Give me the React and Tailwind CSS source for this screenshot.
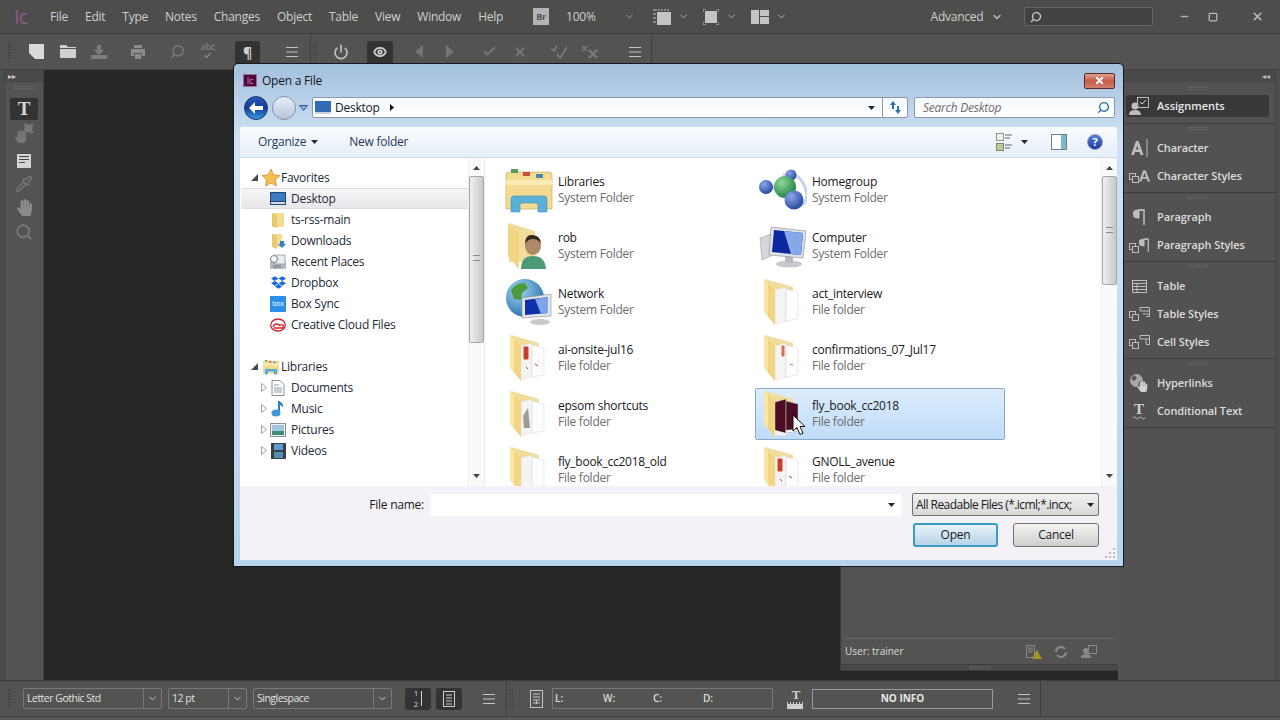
import React from "react";
import { ChevronDown, Power, Eye, Check, X, Search, Minus, Square, Pipette } from "lucide-react";
import { FaDropbox, FaHandPaper } from "react-icons/fa";

const Hamburger = () => (
  <svg width="14" height="10" viewBox="0 0 14 10" stroke="#c4c4c4" strokeWidth="1">
    <path d="M1 .5h12M1 5h12M1 9.5h12" />
  </svg>
);

const Grip = () => (
  <div className="w-[3px] h-[20px] border-x border-dotted border-[#3f3f3f]" />
);

const GripH = () => <div className="w-[20px] h-[3px] border-y border-dotted border-[#6c6c6c]" />;

// one toolbar slot, the margin gives its place
const Tb = ({ className = "", children }) => (
  <div className={`w-[20px] h-[24px] flex items-center justify-center shrink-0 ${className}`}>{children}</div>
);

const Caret = ({ className = "" }) => (
  <svg width="7" height="4" viewBox="0 0 7 4" className={className}>
    <path d="M0 0h7L3.5 4z" fill="#1c2a38" />
  </svg>
);

const FolderIcon = ({ kind = "blank" }) => {
  const accent = { red: "#c8402c", light: "#e06a50", dark: "#4a0d22", grey: "#a09a94", blank: "#e8e8e8" }[kind];
  return (
    <svg width="36" height="48" viewBox="0 0 36 48" className="mr-[4px]">
      <polygon points="2,1 30,9 30,16 2,14" fill="#f2dc9c" />
      <polygon points="12,12 23,9 23,43 12,46" fill={kind === "dark" ? accent : "#f4f4f4"} stroke="#d8d8d8" strokeWidth=".5" />
      <polygon points="23,11 35,14 35,41 23,43" fill={kind === "dark" ? accent : "#fdfdfd"} stroke="#d4d4d4" strokeWidth=".5" />
      {kind === "red" && <path d="M15 13h4v12h-4zM26 30l3 2M17 33l2 2" fill={accent} stroke={accent} />}
      {kind === "light" && <path d="M19 12h2v10h-2zM27 30l3 1" fill={accent} stroke={accent} />}
      {kind === "grey" && <path d="M14 26l5-8 2 20h-6z" fill={accent} />}
      {kind === "dark" && <path d="M12 40l11 3v2l-11 1zM23 40l12-1v2l-12 2z" fill="#f4f4f4" />}
      <polygon points="1,1 12,12 12,47 1,34" fill="#f1d583" />
      <polygon points="1,1 5,5 5,38 1,34" fill="#f8e6a6" />
    </svg>
  );
};

const LibrariesIcon = ({ size = 48 }) => (
  <svg width={size} height={size} viewBox="0 0 48 48">
    <path d="M1 9q0-3 3-3h40q3 0 3 3v34H1z" fill="#f3dc92" stroke="#c9ae64" strokeWidth=".7" />
    <rect x="6" y="3" width="7" height="4" fill="#5a9a5a" />
    <rect x="18" y="6" width="7" height="4" fill="#c8503a" />
    <rect x="31" y="8" width="7" height="4" fill="#4a88b8" />
    <path d="M1 14h46v5H1z" fill="#f9ebb8" />
    <path d="M6 46V33q0-3 3-3h30q3 0 3 3v13h-9v-7q0-2-2-2H17q-2 0-2 2v7z" fill="#5bb0d8" stroke="#3f8fb8" strokeWidth=".6" />
  </svg>
);

const RobIcon = () => (
  <svg width="40" height="48" viewBox="0 0 40 48" className="mr-[4px]">
    <polygon points="2,1 28,9 28,40 2,40" fill="#f2dc9c" />
    <polygon points="1,1 12,11 12,47 1,34" fill="#f1d583" />
    <ellipse cx="26" cy="24" rx="8" ry="9" fill="#b08a68" />
    <path d="M18 22q0-10 8-9t8 9q-3-5-8-5t-8 5z" fill="#33291f" />
    <path d="M14 47q0-13 12-13t13 13z" fill="#4d9a78" />
  </svg>
);

const NetworkIcon = () => (
  <svg width="48" height="48" viewBox="0 0 48 48">
    <defs>
      <radialGradient id="globe" cx=".35" cy=".3" r=".8">
        <stop offset="0" stopColor="#9fd4f0" />
        <stop offset="1" stopColor="#1f6aa8" />
      </radialGradient>
    </defs>
    <circle cx="20" cy="20" r="19" fill="url(#globe)" />
    <path d="M6 12q6-8 14-7l3 5-6 5-1 7-7-1zM22 24l8 2-2 9-5 3z" fill="#4c9a3c" />
    <ellipse cx="35" cy="44" rx="10" ry="3" fill="#c8c8c8" />
    <polygon points="17,20 46,16 46,38 17,40" fill="#e2e4e8" stroke="#8a8e94" strokeWidth=".6" />
    <polygon points="20,22 43,19 43,35 20,37" fill="#1030a8" />
    <polygon points="30,21 43,19 43,35 36,36" fill="#7ea4e8" />
  </svg>
);

const HomegroupIcon = () => (
  <svg width="48" height="42" viewBox="0 0 48 42">
    <defs>
      <radialGradient id="ballB" cx=".35" cy=".3" r=".8">
        <stop offset="0" stopColor="#8aa8e8" />
        <stop offset="1" stopColor="#1f3f98" />
      </radialGradient>
      <radialGradient id="ballG" cx=".35" cy=".3" r=".8">
        <stop offset="0" stopColor="#8ed89a" />
        <stop offset="1" stopColor="#127a3a" />
      </radialGradient>
    </defs>
    <path d="M24 6q16-4 22 12t-8 20" fill="none" stroke="#c8d4ec" strokeWidth="3" />
    <path d="M10 14q10 12 22 12" fill="none" stroke="#c8d4ec" strokeWidth="3" />
    <circle cx="32" cy="6" r="5.5" fill="url(#ballB)" />
    <circle cx="26" cy="18" r="11" fill="url(#ballG)" />
    <circle cx="7" cy="18" r="7" fill="url(#ballB)" />
    <circle cx="35" cy="31" r="9.5" fill="url(#ballB)" />
  </svg>
);

const ComputerIcon = () => (
  <svg width="48" height="44" viewBox="0 0 48 44">
    <polygon points="1,14 12,10 12,32 3,36" fill="#d4d6da" stroke="#8f9298" strokeWidth=".5" />
    <ellipse cx="30" cy="40" rx="13" ry="3.5" fill="#c6c8cc" />
    <rect x="26" y="31" width="8" height="8" fill="#b8babe" />
    <polygon points="12,3 47,7 44,34 10,31" fill="#dfe2e6" stroke="#868a90" strokeWidth=".6" />
    <polygon points="15,6 44,9 42,31 13,28" fill="#0c28a0" />
    <polygon points="25,7 44,9 42,31 32,30" fill="#86a8e8" />
  </svg>
);

const Small = {
  desktop: (
    <svg width="16" height="16" viewBox="0 0 16 16">
      <rect x="0" y="1" width="16" height="13" fill="#24476f" />
      <rect x="1" y="2" width="14" height="8" fill="#3d7cc4" />
      <rect x="1" y="11" width="14" height="2" fill="#d6dde6" />
    </svg>
  ),
  folder: (
    <svg width="16" height="16" viewBox="0 0 16 16">
      <path d="M2 1h12v14H2z" fill="#f3dc92" />
      <path d="M2 1l5 3v12l-5-2z" fill="#e8c76e" />
    </svg>
  ),
  downloads: (
    <svg width="16" height="16" viewBox="0 0 16 16">
      <path d="M2 1h10v13H2z" fill="#f3dc92" />
      <path d="M2 1l5 3v12l-5-2z" fill="#e8c76e" />
      <path d="M10 8h4v3h2l-4 4-4-4h2z" fill="#2f80d0" />
    </svg>
  ),
  recent: (
    <svg width="16" height="16" viewBox="0 0 16 16">
      <rect x="0" y="7" width="16" height="8" fill="#b4bac2" />
      <rect x="5" y="1" width="10" height="9" fill="#e8ebef" stroke="#8f959c" strokeWidth=".7" />
      <circle cx="4" cy="5" r="3.5" fill="#f4f4f4" stroke="#7c8288" />
      <path d="M3 11h8v3H3z" fill="#8f98a2" />
    </svg>
  ),
  box: (
    <div className="w-[16px] h-[16px] bg-[#2a8fe8] flex items-center justify-center text-white text-[7px] leading-none">box</div>
  ),
  cloud: (
    <svg width="16" height="14" viewBox="0 0 16 14" fill="none" stroke="#d81e28">
      <ellipse cx="8" cy="7" rx="7.3" ry="6" strokeWidth="1.3" />
      <path d="M3.5 9q0-3 3-3t3 2q1-2 3-1t0 3H4" strokeWidth="1.3" />
    </svg>
  ),
  doc: (
    <svg width="14" height="16" viewBox="0 0 14 16">
      <path d="M1 .5h8l4 4v11H1z" fill="#fbfbfb" stroke="#8b929a" />
      <path d="M3 5h5M3 8h8M3 10h8M3 12h8" stroke="#8fa0b8" />
    </svg>
  ),
  music: (
    <svg width="16" height="16" viewBox="0 0 16 16">
      <path d="M9 0v11" stroke="#2c80c4" strokeWidth="2" />
      <ellipse cx="6" cy="12" rx="4.5" ry="3.5" fill="#3f9ad8" />
      <path d="M9 0q5 2 4 7-1-3-4-3z" fill="#2c80c4" />
    </svg>
  ),
  pictures: (
    <svg width="16" height="14" viewBox="0 0 16 14">
      <rect x=".5" y=".5" width="15" height="13" fill="#eef1f4" stroke="#8a9098" />
      <rect x="2" y="2" width="12" height="6" fill="#9fc8e0" />
      <rect x="2" y="8" width="12" height="4" fill="#3f8a78" />
    </svg>
  ),
  videos: (
    <svg width="15" height="16" viewBox="0 0 15 16">
      <rect width="15" height="16" fill="#3a3f46" />
      <rect x="3" y="1" width="9" height="6" fill="#5d9ad0" />
      <rect x="3" y="9" width="9" height="6" fill="#4f8fb0" />
    </svg>
  ),
};

const NavHeader = ({ icon, label }) => (
  <div className="h-[21px] flex items-center pl-[10px] text-[12px] text-[#1e2a38]">
    <svg width="7" height="7" viewBox="0 0 7 7" className="mr-[3px]"><path d="M7 0v7H0z" fill="#4a4a4a" /></svg>
    <div className="w-[20px] flex justify-center">{icon}</div>
    <span>{label}</span>
  </div>
);

const NavItem = ({ icon, label, active, expander }) => (
  <div className={`h-[21px] flex items-center text-[12px] text-[#1e2a38] pl-[20px] border-y ${active ? "bg-gradient-to-b from-[#f6f6f8] to-[#e7e7ea] border-[#dcdcdf] rounded-l-[2px]" : "border-transparent"}`}>
    <div className="w-[9px]">
      {expander && (
        <svg width="6" height="9" viewBox="0 0 6 9"><path d="M.5.5l5 4-5 4z" fill="#fff" stroke="#a0a0a0" /></svg>
      )}
    </div>
    <div className="w-[16px] flex justify-center">{icon}</div>
    <span className="ml-[5px]">{label}</span>
  </div>
);

const Tile = ({ icon, name, sub, selected }) => (
  <div className={`w-[250px] h-[52px] flex items-center rounded-[2px] border ${selected ? "border-[#8aa8c8] bg-gradient-to-b from-[#dcecfc] to-[#c0dcf8]" : "border-transparent"}`}>
    <div className="w-[53px] h-[50px] flex items-center justify-center shrink-0">{icon}</div>
    <div className="ml-[3px] text-[12px] leading-[16px]">
      <div className="text-[#1a1a1a]">{name}</div>
      <div className="text-[#6d6d6d]">{sub}</div>
    </div>
  </div>
);

const ScrollBar = ({ thumbClass, gripClass }) => (
  <div className="w-[16px] h-full bg-[#fafafa] border-l border-[#eeeeee] flex flex-col items-center relative shrink-0">
    <svg width="7" height="4" viewBox="0 0 7 4" className="absolute top-[8px]"><path d="M3.5 0L7 4H0z" fill="#444" /></svg>
    <div className={`absolute top-[18px] left-0 w-[15px] rounded-[2px] border border-[#a8a8a8] bg-gradient-to-r from-[#f0f0f0] to-[#c8c8c8] ${thumbClass}`}>
      <div className={`absolute left-[3px] w-[7px] h-[6px] border-y border-[#8a8a8a] ${gripClass}`} />
    </div>
    <svg width="7" height="4" viewBox="0 0 7 4" className="absolute bottom-[8px]"><path d="M0 0h7L3.5 4z" fill="#444" /></svg>
  </div>
);

const Dialog = () => (
  <div className="absolute left-[233px] top-[63px] w-[891px] h-[504px] flex flex-col border border-[#141820] rounded-t-[5px] tracking-[-0.25px] bg-gradient-to-b from-[#a3c0dd] via-[#d0e2f4] via-15% to-[#b8d4ee]">
    <div className="h-[33px] flex items-center pl-[9px] pr-[8px] shrink-0">
      <div className="w-[14px] h-[13px] bg-[#4a0a3a] border border-[#a868a0] text-[#e080c8] text-[9px] leading-[11px] text-center">Ic</div>
      <span className="ml-[5px] text-[12px] text-[#10161c]">Open a File</span>
      <div className="ml-auto w-[31px] h-[16px] rounded-[2px] border border-[#5a2a26] bg-gradient-to-b from-[#e0a090] via-[#c85a48] to-[#d08070] flex items-center justify-center">
        <X size={11} strokeWidth={4} color="#fff" />
      </div>
    </div>

    <div className="h-[21px] flex items-center pl-[10px] pr-[8px] shrink-0">
      <div className="w-[24px] h-[24px] rounded-full bg-gradient-to-b from-[#2a5ab8] via-[#123a9a] to-[#3f9ae0] border border-[#143068] flex items-center justify-center">
        <svg width="14" height="12" viewBox="0 0 14 12"><path d="M6 0v4h8v4H6v4L0 6z" fill="#fff" /></svg>
      </div>
      <div className="ml-[4px] w-[24px] h-[24px] rounded-full bg-gradient-to-b from-[#e8eef6] to-[#b4c4d8] border border-[#7e94ae]" />
      <svg width="9" height="6" viewBox="0 0 9 6" className="ml-[3px]"><path d="M.5.5h8L4.5 5.5z" fill="#7fb0e0" stroke="#2c5a90" /></svg>
      <div className="ml-[4px] w-[596px] h-[21px] border border-[#8a98a8] rounded-[2px] bg-gradient-to-b from-[#f4f8fc] to-white flex items-center text-[12px] text-[#16202c]">
        <div className="ml-[2px] w-[16px] h-[13px] bg-[#2f6cb4] border-b-2 border-[#c8d4e0]" />
        <span className="ml-[4px]">Desktop</span>
        <svg width="4" height="7" viewBox="0 0 4 7" className="ml-[10px]"><path d="M0 0l4 3.5L0 7z" fill="#10161c" /></svg>
        <Caret className="ml-auto mr-[7px]" />
        <div className="w-[25px] h-full border-l border-[#8a98a8] flex items-center justify-center">
          <svg width="13" height="13" viewBox="0 0 13 13" fill="#2c70b8"><path d="M4 0L1 4h2v4h2V4h2zM9 13l3-4h-2V5H8v4H6z" /></svg>
        </div>
      </div>
      <div className="ml-[6px] flex-1 h-[21px] border border-[#8a98a8] rounded-[2px] bg-gradient-to-b from-[#f4f8fc] to-white flex items-center pl-[8px] pr-[4px] text-[12px] italic text-[#6d6d6d]">
        <span>Search Desktop</span>
        <Search size={13} strokeWidth={2.5} color="#2c6a98" className="ml-auto -scale-x-100" />
      </div>
    </div>

    <div className="flex-1 min-h-0 mx-[6px] mt-[9px] mb-[6px] flex flex-col">
      <div className="h-[31px] shrink-0 flex items-center pl-[18px] pr-[14px] text-[12px] text-[#1e3a5a] bg-gradient-to-b from-[#fafcfe] to-[#e6eef8] border-b border-[#d0dae4] rounded-t-[2px]">
        <span>Organize</span>
        <Caret className="ml-[5px]" />
        <span className="ml-[31px]">New folder</span>
        <div className="ml-auto flex items-center">
          <svg width="16" height="18" viewBox="0 0 16 18">
            <rect x=".5" y=".5" width="7" height="7" fill="#eef2ee" stroke="#8a9a8a" />
            <rect x=".5" y="10.5" width="7" height="7" fill="#b8cc98" stroke="#7a8a6a" />
            <path d="M9 2h7M9 5h5M9 12h7M9 15h5" stroke="#5a6a7a" />
          </svg>
          <Caret className="ml-[9px]" />
          <div className="ml-[23px] w-[16px] h-[16px] border border-[#6a8090] bg-white flex justify-end">
            <div className="w-[5px] bg-[#7ab8d0]" />
          </div>
          <div className="ml-[20px] w-[16px] h-[16px] rounded-full bg-gradient-to-b from-[#5a80d8] to-[#1c3a98] border border-[#8898b8] text-white text-[11px] font-bold leading-[14px] text-center">?</div>
        </div>
      </div>

      <div className="h-[328px] shrink-0 flex bg-white">
        <div className="w-[245px] shrink-0 flex border-r border-[#ececec]">
          <div className="flex-1 pt-[9px] pl-[1px]">
            <NavHeader label="Favorites" icon={<svg width="18" height="17" viewBox="0 0 18 17"><path d="M9 0l2.7 5.8 6.3.7-4.7 4.3 1.3 6.2L9 14l-5.6 3 1.3-6.2L0 6.5l6.3-.7z" fill="#f5c050" stroke="#c87e28" strokeWidth=".7" /></svg>} />
            <NavItem active label="Desktop" icon={Small.desktop} />
            <NavItem label="ts-rss-main" icon={Small.folder} />
            <NavItem label="Downloads" icon={Small.downloads} />
            <NavItem label="Recent Places" icon={Small.recent} />
            <NavItem label="Dropbox" icon={<FaDropbox size={15} color="#1a6ae0" />} />
            <NavItem label="Box Sync" icon={Small.box} />
            <NavItem label="Creative Cloud Files" icon={Small.cloud} />
            <div className="h-[21px]" />
            <NavHeader label="Libraries" icon={<LibrariesIcon size={16} />} />
            <NavItem expander label="Documents" icon={Small.doc} />
            <NavItem expander label="Music" icon={Small.music} />
            <NavItem expander label="Pictures" icon={Small.pictures} />
            <NavItem expander label="Videos" icon={Small.videos} />
          </div>
          <ScrollBar thumbClass="h-[167px]" gripClass="top-[78px]" />
        </div>

        <div className="flex-1 min-w-0 flex">
          <div className="flex-1 overflow-hidden pt-[6px] pl-[16px] relative">
            <div className="grid grid-cols-[254px_250px] auto-rows-[52px] gap-y-[4px]">
              <Tile name="Libraries" sub="System Folder" icon={<LibrariesIcon />} />
              <Tile name="Homegroup" sub="System Folder" icon={<HomegroupIcon />} />
              <Tile name="rob" sub="System Folder" icon={<RobIcon />} />
              <Tile name="Computer" sub="System Folder" icon={<ComputerIcon />} />
              <Tile name="Network" sub="System Folder" icon={<NetworkIcon />} />
              <Tile name="act_interview" sub="File folder" icon={<FolderIcon />} />
              <Tile name="ai-onsite-jul16" sub="File folder" icon={<FolderIcon kind="red" />} />
              <Tile name="confirmations_07_Jul17" sub="File folder" icon={<FolderIcon kind="light" />} />
              <Tile name="epsom shortcuts" sub="File folder" icon={<FolderIcon kind="grey" />} />
              <Tile selected name="fly_book_cc2018" sub="File folder" icon={<FolderIcon kind="dark" />} />
              <Tile name="fly_book_cc2018_old" sub="File folder" icon={<FolderIcon />} />
              <Tile name="GNOLL_avenue" sub="File folder" icon={<FolderIcon kind="red" />} />
            </div>
            {/* mouse pointer */}
            <svg width="14" height="22" viewBox="0 0 14 22" className="absolute left-[307px] top-[256px]">
              <path d="M1 1v16l4-3.500 3 7 3-1.300-3-6.700h5z" fill="#fff" stroke="#111" strokeWidth="1" />
            </svg>
          </div>
          <ScrollBar thumbClass="h-[109px]" gripClass="top-[50px]" />
        </div>
      </div>

      <div className="flex-1 min-h-0 bg-[#f4f2f7] pt-[7px] pr-[18px] text-[12px] text-[#1a1a1a] relative">
        <div className="h-[23px] flex items-center justify-end">
          <span>File name:</span>
          <div className="ml-[6px] w-[471px] h-[22px] bg-white flex items-center justify-end pr-[6px]">
            <Caret />
          </div>
          <div className="ml-[11px] w-[187px] h-[23px] border border-[#707070] rounded-[2px] bg-gradient-to-b from-[#f2f2f2] to-[#d8d8d8] flex items-center pl-[3px] pr-[4px]">
            <span className="whitespace-nowrap tracking-[-0.55px]">All Readable Files (*.icml;*.incx;</span>
            <Caret className="ml-auto" />
          </div>
        </div>
        <div className="mt-[7px] h-[24px] flex justify-end gap-[15px]">
          <div className="w-[85px] h-full rounded-[3px] border-2 border-[#3a9ac8] bg-gradient-to-b from-[#e8f2fa] to-[#b8d4e8] flex items-center justify-center">Open</div>
          <div className="w-[86px] h-full rounded-[3px] border border-[#707070] bg-gradient-to-b from-[#f4f4f4] to-[#cfcfcf] flex items-center justify-center">Cancel</div>
        </div>
        {/* resize corner */}
        <svg width="10" height="10" viewBox="0 0 10 10" fill="#b8bcc4" className="absolute right-[2px] bottom-[2px]">
          <path d="M8 0h2v2H8zM4 4h2v2H4zM8 4h2v2H8zM0 8h2v2H0zM4 8h2v2H4zM8 8h2v2H8z" />
        </svg>
      </div>
    </div>
  </div>
);

const DockGroup = ({ className = "", children }) => (
  <div className={`border-b border-[#3c3c3c] flex flex-col ${className}`}>
    <div className="h-[9px] flex items-center justify-center shrink-0"><GripH /></div>
    {children}
  </div>
);

const DockRow = ({ icon, label, className = "" }) => (
  <div className={`h-[28px] flex items-center ml-[6px] ${className}`}>
    <div className="w-[26px] flex justify-center">{icon}</div>
    <span className="ml-[5px] text-[11px] font-semibold tracking-[-0.1px] text-[#dcdcdc] whitespace-nowrap">{label}</span>
  </div>
);

const Stack = () => (
  <svg width="10" height="10" viewBox="0 0 10 10" fill="#535353" stroke="#bdbdbd"><rect x=".5" y=".5" width="6" height="6" /><rect x="3.500" y="3.500" width="6" height="6" /></svg>
);

const ParaGlyph = ({ size = 13 }) => (
  <svg width={size} height={size + 4} viewBox="0 0 13 17">
    <path d="M10 1H5Q0 1 0 5t5 4h1V1z" fill="#bdbdbd" stroke="#bdbdbd" />
    <path d="M6 1h5v15" fill="none" stroke="#bdbdbd" strokeWidth="1.500" />
  </svg>
);

const Dock = () => (
  <div className="w-[156px] shrink-0 bg-[#525252] border-r border-[#444] flex flex-col">
    <div className="h-[12px] bg-[#484848] text-[8px] leading-[12px] text-right pr-[5px] text-[#bbb] shrink-0">◂◂</div>
    <div className="border-b border-[#3c3c3c] flex flex-col h-[42px] shrink-0">
      <div className="h-[12px] flex items-center justify-center shrink-0"><GripH /></div>
      <div className="mt-[1px] mx-[6px] h-[22px] bg-[#383838] rounded-[2px] flex items-center">
        <div className="w-[26px] flex justify-center">
          <svg width="20" height="18" viewBox="0 0 20 18">
            <rect x="8.500" y=".5" width="11" height="10" fill="none" stroke="#bdbdbd" />
            <path d="M11 5l2 2 4-4" fill="none" stroke="#d8d8d8" />
            <circle cx="6" cy="9" r="3.500" fill="#bdbdbd" />
            <path d="M0 18q0-5 6-5t6 5z" fill="#bdbdbd" />
          </svg>
        </div>
        <span className="ml-[5px] text-[11px] font-semibold text-[#e8e8e8]">Assignments</span>
      </div>
    </div>
    <DockGroup className="h-[69px] shrink-0">
      <DockRow className="mt-[1px]" label="Character" icon={<svg width="17" height="18" viewBox="0 0 17 18"><path d="M0 16L5 2h2.500l5 14h-3l-1-3H4l-1 3zM5 10.500h2.500L6.200 6.500z" fill="#bdbdbd" /><path d="M16 0v18" stroke="#bdbdbd" /></svg>} />
      <DockRow label="Character Styles" icon={<div className="flex items-end"><Stack /><svg width="11" height="14" viewBox="0 0 12 14"><path d="M0 13L4.500 1h3L12 13H9.500l-1-3h-5l-1 3zM4.300 8h3.400L6 3.500z" fill="#bdbdbd" /></svg></div>} />
    </DockGroup>
    <DockGroup className="h-[69px] shrink-0">
      <DockRow className="mt-[1px]" label="Paragraph" icon={<ParaGlyph />} />
      <DockRow label="Paragraph Styles" icon={<div className="flex items-end"><Stack /><ParaGlyph size={11} /></div>} />
    </DockGroup>
    <DockGroup className="h-[97px] shrink-0">
      <DockRow className="mt-[1px]" label="Table" icon={<svg width="15" height="13" viewBox="0 0 15 13" fill="none" stroke="#bdbdbd"><rect x=".5" y=".5" width="14" height="12" /><path d="M.5 3.500h14M.5 6.500h14M.5 9.500h14M5 3.500v9" /></svg>} />
      <DockRow label="Table Styles" icon={<div className="flex items-end"><Stack /><svg width="11" height="14" viewBox="0 0 11 14" fill="none" stroke="#bdbdbd"><path d="M1 4V.5h9.500v9H7M1 4h9.500M4 7h6.500" /></svg></div>} />
      <DockRow label="Cell Styles" icon={<div className="flex items-end"><Stack /><svg width="11" height="14" viewBox="0 0 11 14" fill="none" stroke="#bdbdbd"><path d="M1 4V.5h9.500v9H7M1 4h9.500M7 4v5" /></svg></div>} />
    </DockGroup>
    <DockGroup className="h-[69px] shrink-0">
      <DockRow className="mt-[1px]" label="Hyperlinks" icon={<div className="relative w-[18px] h-[18px]"><svg width="13" height="13" viewBox="0 0 13 13" className="absolute left-0 top-0"><circle cx="6.500" cy="6.500" r="6.500" fill="#a8a8a8" /><path d="M4 1l3 3-3 3-3-2zM9 8l3-1-1 4-3 1z" fill="#535353" /></svg><FaHandPaper size={11} color="#d0d0d0" className="absolute right-0 bottom-0" /></div>} />
      <DockRow label="Conditional Text" icon={<div className="flex flex-col items-center"><span className="font-['Liberation_Serif',serif] font-bold text-[15px] leading-[13px] text-[#d0d0d0]">T</span><svg width="13" height="4" viewBox="0 0 13 4"><path d="M0 2q1.500-2 3 0t3 0 3 0 3 0" fill="none" stroke="#bdbdbd" /></svg></div>} />
    </DockGroup>
  </div>
);

const SelectBox = ({ className, label }) => (
  <div className={`h-[21px] border border-[#787878] rounded-[2px] flex items-center text-[10.5px] tracking-[-0.5px] text-[#e0e0e0] ${className}`}>
    <span className="flex-1 pl-[3px] whitespace-nowrap">{label}</span>
    <div className="w-[18px] h-full border-l border-[#787878] flex items-center justify-center">
      <ChevronDown size={11} color="#cfcfcf" />
    </div>
  </div>
);

const MenuBar = () => (
  <div className="h-[34px] shrink-0 flex items-center bg-[#4d4d4b] border-b border-[#3a3a3a] text-[12px] tracking-[-0.25px] text-[#cfcfcf]">
    <span className="ml-[14px] w-[36px] text-[20px] leading-none text-[#8a5a88] tracking-[-1px]">Ic</span>
    <div className="flex gap-[17px]">
      {["File", "Edit", "Type", "Notes", "Changes", "Object", "Table", "View", "Window", "Help"].map((m) => (
        <span key={m}>{m}</span>
      ))}
    </div>
    <div className="ml-[30px] w-[16px] h-[17px] bg-[#b4b4b4] text-[#555] text-[9px] font-bold text-center leading-[17px]">Br</div>
    <span className="ml-[17px]">100%</span>
    <ChevronDown size={11} color="#999" className="ml-[28px]" />
    <svg width="18" height="16" viewBox="0 0 18 16" className="ml-[18px]"><rect x="4" y="3" width="14" height="13" fill="#c4c4c4" /><path d="M0 1h4M0 5h3M0 9h3M0 13h3M6 0v2M9 0v2M12 0v2M15 0v2" stroke="#c4c4c4" /></svg>
    <ChevronDown size={11} color="#bbb" className="ml-[7px]" />
    <svg width="16" height="16" viewBox="0 0 16 16" className="ml-[14px]"><rect x="2" y="2" width="12" height="12" fill="#c4c4c4" /><path d="M0 3V0h3M13 0h3v3M16 13v3h-3M3 16H0v-3" fill="none" stroke="#c4c4c4" /></svg>
    <ChevronDown size={11} color="#bbb" className="ml-[7px]" />
    <svg width="18" height="14" viewBox="0 0 18 14" fill="#c4c4c4" className="ml-[14px]"><rect width="8" height="14" /><rect x="9" width="9" height="6" /><rect x="9" y="7" width="9" height="7" /></svg>
    <ChevronDown size={11} color="#bbb" className="ml-[7px]" />
    <span className="ml-[144px]">Advanced</span>
    <ChevronDown size={12} strokeWidth={3} color="#bbb" className="ml-[8px]" />
    <div className="ml-[21px] w-[129px] h-[19px] border border-[#666] rounded-[2px] bg-[#434341] flex items-center pl-[5px]">
      <Search size={12} strokeWidth={2.5} color="#cfcfcf" className="-scale-x-100" />
    </div>
    <Minus size={11} strokeWidth={3} color="#aaa" className="ml-[26px]" />
    <Square size={10} strokeWidth={3} color="#bbb" className="ml-[18px]" />
    <X size={13} strokeWidth={3} color="#bbb" className="ml-[33px]" />
  </div>
);

const ControlBar = () => (
  <div className="h-[36px] shrink-0 flex items-center bg-[#535351] border-b border-[#444]">
    <div className="ml-[8px]"><Grip /></div>
    <Tb className="ml-[15px]">
      <svg width="15" height="15" viewBox="0 0 15 15"><path d="M0 0h15v15H6L0 9z" fill="#dadada" /></svg>
    </Tb>
    <Tb className="ml-[12px]">
      <svg width="16" height="13" viewBox="0 0 16 13" fill="#d0d0d0"><path d="M0 0h6l2 2h8v1H0zM0 4h16v9H0z" /></svg>
    </Tb>
    <Tb className="ml-[11px]">
      <svg width="16" height="14" viewBox="0 0 16 14" fill="#7c7c7c"><path d="M6 0h4v5h3l-5 5-5-5h3zM0 10h16v4H0z" /></svg>
    </Tb>
    <Tb className="ml-[19px]">
      <svg width="14" height="14" viewBox="0 0 14 14" fill="#8c8c8c"><path d="M3 0h8v3H3zM0 4h14v7h-3V8H3v3H0zM4 9h6v5H4z" /></svg>
    </Tb>
    <Tb className="ml-[19px]"><Search size={15} strokeWidth={2.5} color="#777" className="-scale-x-100" /></Tb>
    <Tb className="ml-[11px]">
      <div className="flex flex-col items-center text-[9px] leading-[8px] text-[#8c8c8c]">abc<Check size={9} strokeWidth={3} color="#8c8c8c" /></div>
    </Tb>
    <div className="ml-[17px] w-[25px] h-[28px] self-end bg-[#333] rounded-t-[3px] flex justify-center pt-[1px] text-[#d0d0d0] text-[14px] font-bold">¶</div>
    <Tb className="ml-[22px]"><Hamburger /></Tb>
    <div className="ml-[8px] w-px h-full bg-[#3f3f3f]" />
    <div className="ml-[2px]"><Grip /></div>
    <Tb className="ml-[15px]"><Power size={16} strokeWidth={2.5} color="#c0c0c0" /></Tb>
    <div className="ml-[16px] w-[26px] h-[28px] self-end bg-[#333] rounded-t-[3px] flex justify-center pt-[4px]"><Eye size={14} strokeWidth={3} color="#d0d0d0" /></div>
    <Tb className="ml-[16px]"><svg width="8" height="13" viewBox="0 0 8 13"><path d="M8 0v13L0 6.500z" fill="#747474" /></svg></Tb>
    <Tb className="ml-[11px]"><svg width="8" height="13" viewBox="0 0 8 13"><path d="M0 0v13l8-6.500z" fill="#747474" /></svg></Tb>
    <Tb className="ml-[19px]"><Check size={15} strokeWidth={3} color="#777" /></Tb>
    <Tb className="ml-[11px]"><X size={14} strokeWidth={3.500} color="#777" /></Tb>
    <Tb className="ml-[19px]"><svg width="16" height="14" viewBox="0 0 16 14" fill="none" stroke="#7c7c7c" strokeWidth="1.500"><path d="M0 3l3 3 3-5M6 9l3 4 7-11" /></svg></Tb>
    <Tb className="ml-[11px]"><svg width="16" height="14" viewBox="0 0 16 14" fill="none" stroke="#7c7c7c" strokeWidth="1.500"><path d="M0 1l5 5M5 1L0 6" /><path d="M7 5l8 8M15 5l-8 8" strokeWidth="2" /></svg></Tb>
    <Tb className="ml-[25px]"><Hamburger /></Tb>
    <div className="ml-[6px] w-px h-full bg-[#3f3f3f]" />
  </div>
);

const ToolBar = () => (
  <div className="w-[44px] shrink-0 bg-[#4d4d4b] pl-[4px] flex">
    <div className="flex-1 bg-[#535351] border-x border-[#444] flex flex-col items-center">
      <div className="h-[12px] w-full bg-[#484848] text-[8px] leading-[12px] pl-[3px] text-[#ccc]">▸▸</div>
      <div className="mt-[4px]"><GripH /></div>
      <div className="mt-[9px] w-[28px] h-[22px] bg-[#333] rounded-[2px] flex items-center justify-center font-['Liberation_Serif',serif] font-bold text-[19px] text-[#d8d8d8]">T</div>
      <div className="mt-[3px] h-[20px] relative w-[20px]">
        <FaHandPaper size={13} color="#777" className="absolute left-0 bottom-0" />
        <svg width="11" height="11" viewBox="0 0 11 11" className="absolute right-0 top-0"><rect x="2" y="2" width="7" height="7" fill="#777" /><path d="M0 2h11M2 0v11M9 0v11M0 9h11" stroke="#777" /></svg>
      </div>
      <div className="mt-[11px] w-[14px] h-[14px] bg-[#d4d4d4] flex flex-col gap-[2px] p-[2px]">
        <div className="h-px bg-[#444]" /><div className="h-px bg-[#444]" /><div className="h-px w-[6px] bg-[#444]" />
      </div>
      <Pipette size={18} strokeWidth={2} color="#777" className="mt-[7px]" />
      <FaHandPaper size={17} color="#8a8a8a" className="mt-[6px]" />
      <Search size={18} strokeWidth={2.5} color="#777" className="mt-[7px]" />
    </div>
  </div>
);

const AssignPanel = () => (
  <div className="w-[278px] shrink-0 flex flex-col pb-[9px]">
    <div className="flex-1 bg-[#535351] border-l border-[#3a3a3a] flex flex-col justify-end">
      <div className="h-[26px] mx-[4px] border-t border-[#656563] flex items-center text-[10px] text-[#dcdcdc]">
        <span>User: trainer</span>
        <svg width="16" height="14" viewBox="0 0 16 14" className="ml-auto"><path d="M.5.5h8v12h-8zM2 3h5M2 5h5M2 7h4" fill="none" stroke="#8a8a8a" /><path d="M11 5l5 9H6z" fill="#a89030" /></svg>
        <svg width="14" height="14" viewBox="0 0 14 14" fill="none" stroke="#888" strokeWidth="2" className="ml-[12px]"><path d="M2 7a5 5 0 0 1 9-3M12 7a5 5 0 0 1-9 3" /></svg>
        <svg width="16" height="13" viewBox="0 0 16 13" className="ml-[13px] mr-[17px]"><rect x="7.500" y=".5" width="8" height="8" fill="none" stroke="#888" /><circle cx="5" cy="6" r="3" fill="#888" /><path d="M0 13q0-4 5-4t5 4z" fill="#888" /></svg>
      </div>
      <div className="h-[7px] bg-[#4a4a48] border-y border-[#3f3f3f] flex items-center justify-center"><GripH /></div>
    </div>
  </div>
);

const BottomBar = () => (
  <div className="h-[40px] shrink-0 bg-[#585856]">
    <div className="h-[37px] flex items-center bg-[#535351] border-y border-[#3e3e3c]">
      <div className="ml-[8px]"><Grip /></div>
      <SelectBox className="ml-[12px] w-[139px]" label="Letter Gothic Std" />
      <SelectBox className="ml-[6px] w-[79px]" label="12 pt" />
      <SelectBox className="ml-[6px] w-[139px]" label="Singlespace" />
      <div className="ml-[13px] w-[26px] h-[22px] bg-[#333] rounded-[3px] flex items-center justify-center gap-[3px] text-[8px] text-[#d0d0d0]">
        <div className="flex flex-col items-center gap-[1px]">
          <span className="leading-[10px]">1</span>
          <span className="leading-[10px]">2</span>
        </div>
        <div className="w-px h-[15px] bg-[#d0d0d0]" />
      </div>
      <div className="ml-[5px] w-[26px] h-[22px] bg-[#333] rounded-[3px] flex items-center justify-center">
        <svg width="12" height="16" viewBox="0 0 12 16" fill="none" stroke="#d0d0d0"><rect x=".5" y=".5" width="11" height="15" /><path d="M3 4h6M3 7h6M3 10h6M3 13h6" /></svg>
      </div>
      <div className="ml-[20px]"><Hamburger /></div>
      <div className="ml-[10px] w-px h-full bg-[#3e3e3c]" />
      <div className="ml-[3px]"><Grip /></div>
      <svg width="13" height="18" viewBox="0 0 13 18" fill="none" stroke="#c4c4c4" className="ml-[17px]"><rect x=".5" y=".5" width="12" height="17" /><path d="M3 4h7M3 7h7M3 10h7M6.500 10v4M3 13h7" /></svg>
      <div className="ml-[9px] w-[221px] h-[21px] border border-[#787878] flex items-center text-[10px] font-semibold text-[#dcdcdc]">
        <span className="ml-[2px] w-[48px]">L:</span>
        <span className="w-[50px]">W:</span>
        <span className="w-[50px]">C:</span>
        <span>D:</span>
      </div>
      <div className="ml-[14px] w-[18px] flex flex-col items-center">
        <span className="font-['Liberation_Serif',serif] font-bold text-[13px] leading-[11px] text-[#cfcfcf]">T</span>
        <svg width="18" height="7" viewBox="0 0 18 7" fill="#cfcfcf" className="mt-[2px]"><path d="M0 7V0h1v2h2V0h1v2h2V0h1v2h2V0h1v2h2V0h1v2h2V0h1v7z" /></svg>
      </div>
      <div className="ml-[7px] w-[181px] h-[20px] border border-[#9a9a9a] flex items-center justify-center text-[10px] font-bold text-[#e8e8e8]">NO INFO</div>
      <div className="ml-[24px]"><Hamburger /></div>
      <div className="ml-[9px] w-px h-full bg-[#3e3e3c]" />
    </div>
  </div>
);

export default function App() {
  return (
    <div className="relative w-[1280px] h-[720px] overflow-hidden flex flex-col bg-[#535351] font-['Open_Sans',sans-serif]">
      <MenuBar />
      <ControlBar />
      <div className="flex-1 min-h-0 flex">
        <ToolBar />
        <div className="flex-1 min-w-0 bg-[#262826] flex justify-end">
          <AssignPanel />
        </div>
        <div className="w-[2px] bg-[#535351]" />
        <Dock />
        <div className="w-[4px] bg-[#4d4d4b]" />
      </div>
      <BottomBar />
      <Dialog />
    </div>
  );
}
